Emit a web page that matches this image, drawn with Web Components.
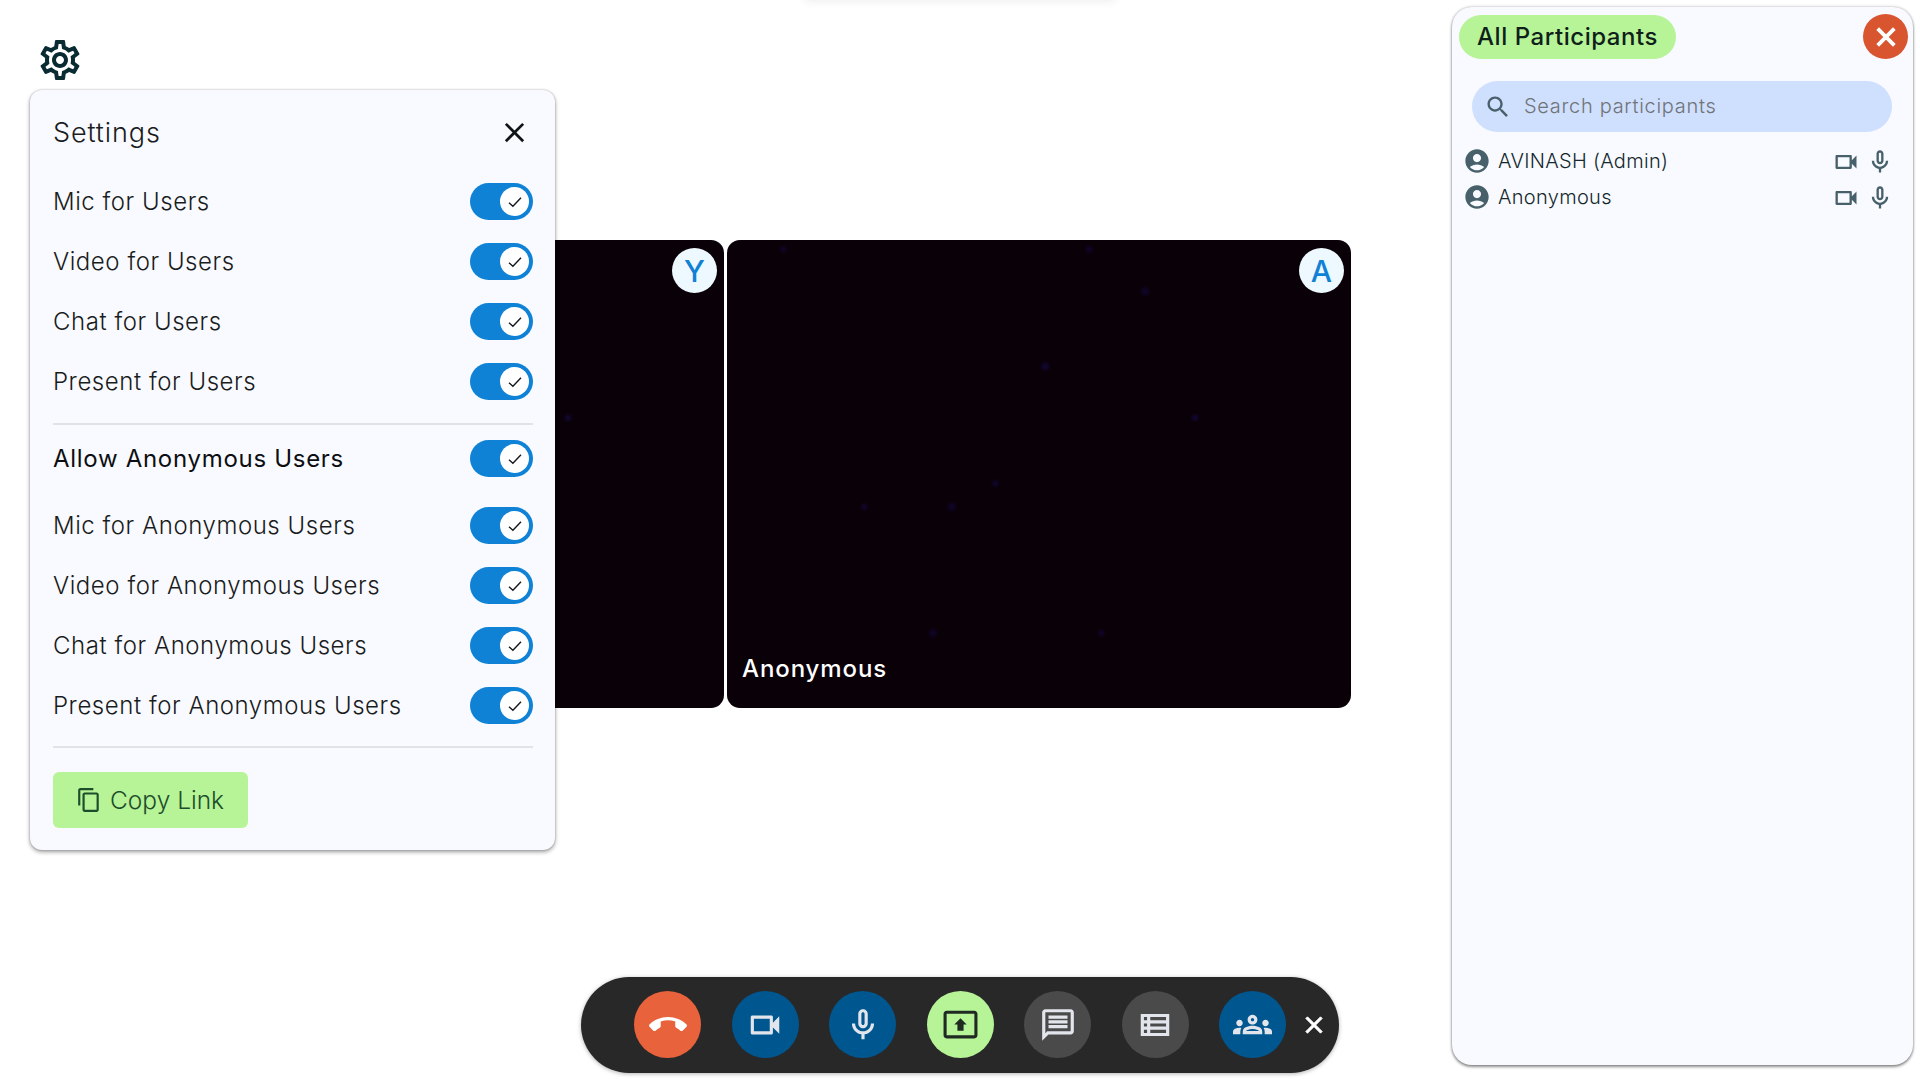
<!DOCTYPE html>
<html lang="en">
<head>
<meta charset="utf-8">
<title>Call</title>
<style>
  html, body {
    margin: 0;
    padding: 0;
    background: #ffffff;
    height: 100%;
    overflow: hidden;
    font-family: 'Inter', 'Liberation Sans', sans-serif;
  }
</style>
</head>
<body>
<call-page></call-page>

<script>
// Material icon paths, all on a 24 unit grid
const ICONS = {
  settings: 'M19.43 12.98c.04-.32.07-.64.07-.98 0-.34-.03-.66-.07-.98l2.11-1.65c.19-.15.24-.42.12-.64l-2-3.46c-.09-.16-.26-.25-.44-.25-.06 0-.12.01-.17.03l-2.49 1c-.52-.4-1.08-.73-1.69-.98l-.38-2.65C14.46 2.18 14.25 2 14 2h-4c-.25 0-.46.18-.49.42l-.38 2.65c-.61.25-1.17.59-1.69.98l-2.49-1c-.06-.02-.12-.03-.18-.03-.17 0-.34.09-.43.25l-2 3.46c-.13.22-.07.49.12.64l2.11 1.65c-.04.32-.07.65-.07.98 0 .33.03.66.07.98l-2.11 1.65c-.19.15-.24.42-.12.64l2 3.46c.09.16.26.25.44.25.06 0 .12-.01.17-.03l2.49-1c.52.4 1.08.73 1.69.98l.38 2.65c.03.24.24.42.49.42h4c.25 0 .46-.18.49-.42l.38-2.65c.61-.25 1.17-.59 1.69-.98l2.49 1c.06.02.12.03.18.03.17 0 .34-.09.43-.25l2-3.46c.12-.22.07-.49-.12-.64l-2.11-1.65zm-1.98-1.71c.04.31.05.52.05.73 0 .21-.02.43-.05.73l-.14 1.13.89.7 1.08.84-.7 1.21-1.27-.51-1.04-.42-.9.68c-.43.32-.84.56-1.25.73l-1.06.43-.16 1.13-.2 1.35h-1.4l-.19-1.35-.16-1.13-1.06-.43c-.43-.18-.83-.41-1.23-.71l-.91-.7-1.06.43-1.27.51-.7-1.21 1.08-.84.89-.7-.14-1.13c-.03-.31-.05-.54-.05-.74s.02-.43.05-.73l.14-1.13-.89-.7-1.08-.84.7-1.21 1.27.51 1.04.42.9-.68c.43-.32.84-.56 1.25-.73l1.06-.43.16-1.13.2-1.35h1.39l.19 1.35.16 1.13 1.06.43c.43.18.83.41 1.23.71l.91.7 1.06-.43 1.27-.51.7 1.21-1.07.85-.89.7.14 1.13zM12 8c-2.21 0-4 1.79-4 4s1.79 4 4 4 4-1.79 4-4-1.79-4-4-4zm0 6c-1.1 0-2-.9-2-2s.9-2 2-2 2 .9 2 2-.9 2-2 2z',
  close: 'M19 6.41 17.59 5 12 10.59 6.41 5 5 6.41 10.59 12 5 17.59 6.41 19 12 13.41 17.59 19 19 17.59 13.41 12z',
  copy: 'M16 1H4c-1.1 0-2 .9-2 2v14h2V3h12V1zm3 4H8c-1.1 0-2 .9-2 2v14c0 1.1.9 2 2 2h11c1.1 0 2-.9 2-2V7c0-1.1-.9-2-2-2zm0 16H8V7h11v14z',
  search: 'M15.5 14h-.79l-.28-.27C15.41 12.59 16 11.11 16 9.5 16 5.91 13.09 3 9.5 3S3 5.91 3 9.5 5.91 16 9.5 16c1.61 0 3.09-.59 4.23-1.57l.27.28v.79l5 4.99L20.49 19l-4.99-5zm-6 0C7.01 14 5 11.99 5 9.5S7.01 5 9.5 5 14 7.01 14 9.5 11.99 14 9.5 14z',
  account: 'M12 2C6.48 2 2 6.48 2 12s4.48 10 10 10 10-4.48 10-10S17.52 2 12 2zm0 4c1.93 0 3.5 1.57 3.5 3.5S13.93 13 12 13s-3.5-1.57-3.5-3.5S10.07 6 12 6zm0 14c-2.03 0-4.43-.82-6.14-2.88C7.55 15.8 9.68 15 12 15s4.45.8 6.14 2.12C16.43 19.18 14.03 20 12 20z',
  videocam: 'M17 10.5V7c0-.55-.45-1-1-1H4c-.55 0-1 .45-1 1v10c0 .55.45 1 1 1h12c.55 0 1-.45 1-1v-3.5l4 4v-11l-4 4zM15 16H5V8h10v8z',
  mic: 'M12 14c1.66 0 3-1.34 3-3V5c0-1.66-1.34-3-3-3S9 3.34 9 5v6c0 1.66 1.34 3 3 3zm-1-9c0-.55.45-1 1-1s1 .45 1 1v6c0 .55-.45 1-1 1s-1-.45-1-1V5zm6 6c0 2.76-2.24 5-5 5s-5-2.24-5-5H5c0 3.53 2.61 6.43 6 6.92V21h2v-3.08c3.39-.49 6-3.39 6-6.92h-2z',
  hangup: 'M12 9c-1.6 0-3.15.25-4.6.72v3.1c0 .39-.23.74-.56.9-.98.49-1.87 1.12-2.66 1.85-.18.18-.43.28-.7.28-.28 0-.53-.11-.71-.29L.29 13.08c-.18-.17-.29-.42-.29-.7 0-.28.11-.53.29-.71C3.34 8.78 7.46 7 12 7s8.66 1.78 11.71 4.67c.18.18.29.43.29.71 0 .28-.11.53-.29.71l-2.48 2.48c-.18.18-.43.29-.71.29-.27 0-.52-.11-.7-.28-.79-.74-1.69-1.36-2.67-1.85-.33-.16-.56-.5-.56-.9v-3.1C15.15 9.25 13.6 9 12 9z',
  present: 'M21 3H3c-1.11 0-2 .89-2 2v14c0 1.11.89 2 2 2h18c1.11 0 2-.89 2-2V5c0-1.11-.89-2-2-2zm0 16.02H3V4.98h18v14.04zM10 12H8l4-4 4 4h-2v4h-4v-4z',
  chat: 'M20 2H4c-1.1 0-2 .9-2 2v18l4-4h14c1.1 0 2-.9 2-2V4c0-1.1-.9-2-2-2zm0 14H5.17L4 17.17V4h16v12zM6 12h12v2H6zM6 9h12v2H6zM6 6h12v2H6z',
  list: 'M3 5v14h18V5H3zm4 2v2H5V7h2zm-2 6v-2h2v2H5zm0 2h2v2H5v-2zm14 2H9v-2h10v2zm0-4H9v-2h10v2zm0-4H9V7h10v2z',
  groups: 'M4 13c1.1 0 2-.9 2-2 0-1.1-.9-2-2-2s-2 .9-2 2c0 1.1.9 2 2 2zm1.13 1.1c-.37-.06-.74-.1-1.13-.1-.99 0-1.93.21-2.78.58C.48 14.9 0 15.62 0 16.43V18h4.5v-1.61c0-.83.23-1.61.63-2.29zM20 13c1.1 0 2-.9 2-2 0-1.1-.9-2-2-2s-2 .9-2 2c0 1.1.9 2 2 2zm4 3.43c0-.81-.48-1.53-1.22-1.85-.85-.37-1.79-.58-2.78-.58-.39 0-.76.04-1.13.1.4.68.63 1.46.63 2.29V18H24v-1.57zm-7.76-2.78c-1.17-.52-2.61-.9-4.24-.9-1.63 0-3.07.39-4.24.9C6.68 14.13 6 15.21 6 16.39V18h12v-1.61c0-1.18-.68-2.26-1.76-2.74zM8.07 16c.09-.23.13-.39.91-.69.97-.38 1.99-.56 3.02-.56s2.05.18 3.02.56c.77.3.81.46.91.69H8.07zM12 8c.55 0 1 .45 1 1s-.45 1-1 1-1-.45-1-1 .45-1 1-1m0-2c-1.66 0-3 1.34-3 3s1.34 3 3 3 3-1.34 3-3-1.34-3-3-3z'
};

class XIcon extends HTMLElement {
  constructor() {
    super();
    this.attachShadow( {mode: 'open'} );
  }

  connectedCallback() {
    const size = this.getAttribute( 'size' ) || 24;
    const weight = this.getAttribute( 'weight' ) || 0;
    const d = ICONS[this.getAttribute( 'name' )];

    this.shadowRoot.innerHTML = /* template */ `
      <style>
        :host {
          display: inline-flex;
          flex: none;
          width: ${size}px;
          height: ${size}px;
        }
        svg {
          display: block;
          width: 100%;
          height: 100%;
          fill: currentColor;
          stroke: currentColor;
          stroke-width: ${weight};
        }
      </style>
      <svg viewBox="0 0 24 24"><path d="${d}"></path></svg>
    `;
  }
}
window.customElements.define( 'x-icon', XIcon );

class ToggleSwitch extends HTMLElement {
  constructor() {
    super();
    const template = document.createElement( 'template' );
    template.innerHTML = /* template */ `
      <style>
        :host {
          box-sizing: border-box;
          display: flex;
          justify-content: flex-end;
          align-items: center;
          flex: none;
          width: 63px;
          height: 37px;
          padding: 0 4px;
          border-radius: 19px;
          background: #0f82d6;
        }
        span {
          display: flex;
          align-items: center;
          justify-content: center;
          width: 29px;
          height: 29px;
          border-radius: 50%;
          background: #ffffff;
        }
        svg {
          width: 18px;
          height: 18px;
          fill: none;
          stroke: #15181c;
          stroke-width: 1.4;
        }
      </style>
      <span><svg viewBox="0 0 18 18"><path d="M3 9.8 L6.9 13.2 L15 4.8"></path></svg></span>
    `;
    this.attachShadow( {mode: 'open'} );
    this.shadowRoot.appendChild( template.content.cloneNode( true ) );
  }
}
window.customElements.define( 'toggle-switch', ToggleSwitch );

class SettingRow extends HTMLElement {
  constructor() {
    super();
    const template = document.createElement( 'template' );
    template.innerHTML = /* template */ `
      <style>
        :host {
          display: flex;
          align-items: center;
          justify-content: space-between;
          height: 37px;
          font-size: 24px;
          font-weight: 300;
          letter-spacing: 0.55px;
          color: #191c20;
        }
        :host( [strong] ) {
          font-weight: 400;
          letter-spacing: 0.7px;
          color: #0c0e11;
        }
      </style>
      <slot></slot>
      <toggle-switch></toggle-switch>
    `;
    this.attachShadow( {mode: 'open'} );
    this.shadowRoot.appendChild( template.content.cloneNode( true ) );
  }
}
window.customElements.define( 'setting-row', SettingRow );

class SettingsPanel extends HTMLElement {
  constructor() {
    super();
    const template = document.createElement( 'template' );
    template.innerHTML = /* template */ `
      <style>
        :host {
          box-sizing: border-box;
          display: flex;
          flex-direction: column;
          width: 525px;
          height: 760px;
          padding: 23px 22px 22px 23px;
          border-radius: 12px;
          background: #f9faff;
          box-shadow: 0 2px 4px rgba( 0, 0, 0, 0.38 ), 0 0 2px rgba( 0, 0, 0, 0.25 );
        }
        header {
          display: flex;
          align-items: center;
          justify-content: space-between;
          height: 40px;
          margin-bottom: 30px;
          padding-right: 2px;
          font-size: 27px;
          font-weight: 300;
          letter-spacing: 0.9px;
          color: #191c20;
        }
        header span {
          padding-bottom: 2px;
        }
        header x-icon {
          color: #111417;
          margin-top: -1px;
        }
        .group {
          display: flex;
          flex-direction: column;
          gap: 23px;
        }
        hr {
          width: 100%;
          height: 2px;
          margin: 23px 0 15px;
          border: 0;
          background: #e2e3e9;
        }
        .allow {
          margin-bottom: 30px;
        }
        .last {
          margin: 22px 0 24px;
        }
        button {
          display: flex;
          align-items: center;
          gap: 8px;
          width: 195px;
          height: 56px;
          padding: 0 0 0 23px;
          border: 0;
          border-radius: 6px;
          background: #b7f397;
          color: #1d4d2b;
          font: 300 24.5px 'Inter', 'Liberation Sans', sans-serif;
        }
      </style>
      <header>
        <span>Settings</span>
        <x-icon name="close" size="33"></x-icon>
      </header>
      <div class="group">
        <setting-row>Mic for Users</setting-row>
        <setting-row>Video for Users</setting-row>
        <setting-row>Chat for Users</setting-row>
        <setting-row>Present for Users</setting-row>
      </div>
      <hr>
      <setting-row class="allow" strong>Allow Anonymous Users</setting-row>
      <div class="group">
        <setting-row>Mic for Anonymous Users</setting-row>
        <setting-row>Video for Anonymous Users</setting-row>
        <setting-row>Chat for Anonymous Users</setting-row>
        <setting-row>Present for Anonymous Users</setting-row>
      </div>
      <hr class="last">
      <button type="button"><x-icon name="copy" size="26"></x-icon>Copy Link</button>
    `;
    this.attachShadow( {mode: 'open'} );
    this.shadowRoot.appendChild( template.content.cloneNode( true ) );
  }
}
window.customElements.define( 'settings-panel', SettingsPanel );

class ParticipantRow extends HTMLElement {
  constructor() {
    super();
    const template = document.createElement( 'template' );
    template.innerHTML = /* template */ `
      <style>
        :host {
          display: flex;
          align-items: center;
          height: 36px;
          color: #47606a;
        }
        .name {
          flex: 1;
          margin-left: 7px;
          font-size: 20px;
          font-weight: 300;
          letter-spacing: 0.3px;
          color: #14282e;
        }
        .cam, .mic {
          margin-top: 1px;
        }
        .mic {
          margin-left: 6px;
        }
      </style>
      <x-icon name="account" size="28"></x-icon>
      <span class="name"><slot></slot></span>
      <x-icon class="cam" name="videocam" size="28"></x-icon>
      <x-icon class="mic" name="mic" size="28"></x-icon>
    `;
    this.attachShadow( {mode: 'open'} );
    this.shadowRoot.appendChild( template.content.cloneNode( true ) );
  }
}
window.customElements.define( 'participant-row', ParticipantRow );

class ParticipantsPanel extends HTMLElement {
  constructor() {
    super();
    const template = document.createElement( 'template' );
    template.innerHTML = /* template */ `
      <style>
        :host {
          box-sizing: border-box;
          display: flex;
          flex-direction: column;
          width: 461px;
          height: 1058px;
          padding: 7px 5px 0 7px;
          border-radius: 20px;
          background: #f9faff;
          box-shadow: 0 2px 3px rgba( 0, 0, 0, 0.4 ), 0 0 3px rgba( 0, 0, 0, 0.3 );
        }
        header {
          display: flex;
          align-items: center;
          justify-content: space-between;
          height: 45px;
        }
        .pill {
          display: flex;
          align-items: center;
          justify-content: center;
          width: 217px;
          height: 44px;
          border-radius: 22px;
          background: #b7f397;
          color: #0f1f1a;
          font-size: 24px;
          font-weight: 500;
          letter-spacing: 0.55px;
          white-space: nowrap;
        }
        .close {
          display: flex;
          align-items: center;
          justify-content: center;
          width: 45px;
          height: 45px;
          border-radius: 50%;
          background: #d95530;
          color: #ffffff;
        }
        .search {
          display: flex;
          align-items: center;
          gap: 12px;
          height: 51px;
          margin: 22px 16px 0 13px;
          padding-left: 12px;
          border-radius: 26px;
          background: #cfdffe;
          color: #47606a;
          font-size: 20px;
          font-weight: 300;
          letter-spacing: 0.7px;
        }
        .search span {
          color: #6f7377;
          padding-bottom: 2px;
        }
        .list {
          display: flex;
          flex-direction: column;
          margin: 11px 14px 0 4px;
        }
      </style>
      <header>
        <div class="pill">All Participants</div>
        <div class="close"><x-icon name="close" size="30" weight="1"></x-icon></div>
      </header>
      <div class="search">
        <x-icon name="search" size="28"></x-icon>
        <span>Search participants</span>
      </div>
      <div class="list">
        <participant-row>AVINASH (Admin)</participant-row>
        <participant-row>Anonymous</participant-row>
      </div>
    `;
    this.attachShadow( {mode: 'open'} );
    this.shadowRoot.appendChild( template.content.cloneNode( true ) );
  }
}
window.customElements.define( 'participants-panel', ParticipantsPanel );

class VideoTile extends HTMLElement {
  constructor() {
    super();
    const template = document.createElement( 'template' );
    template.innerHTML = /* template */ `
      <style>
        :host {
          box-sizing: border-box;
          position: relative;
          display: flex;
          align-items: flex-end;
          flex: none;
          width: 624px;
          height: 468px;
          padding: 0 0 25px 15px;
          border-radius: 13px;
          background-color: #0a0008;
          background-image:
            radial-gradient( circle at 51% 27%, #120836 0, transparent 6px ),
            radial-gradient( circle at 67% 11%, #100630 0, transparent 6px ),
            radial-gradient( circle at 75% 38%, #120836 0, transparent 5px ),
            radial-gradient( circle at 22% 57%, #100630 0, transparent 5px ),
            radial-gradient( circle at 36% 57%, #100630 0, transparent 6px ),
            radial-gradient( circle at 43% 52%, #100630 0, transparent 5px ),
            radial-gradient( circle at 60% 84%, #0f052c 0, transparent 5px ),
            radial-gradient( circle at 33% 84%, #0f052c 0, transparent 6px ),
            radial-gradient( circle at 58% 2%, #100630 0, transparent 5px ),
            radial-gradient( circle at 9% 2%, #0f052c 0, transparent 5px );
          color: #ffffff;
          font-size: 24px;
          font-weight: 500;
          letter-spacing: 0.9px;
        }
        .badge {
          position: absolute;
          top: 8px;
          right: 7px;
          display: flex;
          align-items: center;
          justify-content: center;
          width: 45px;
          height: 45px;
          border-radius: 50%;
          background: #eef8ff;
          color: #0f82d6;
          font-size: 30px;
          font-weight: 500;
          letter-spacing: 0;
        }
      </style>
      <slot></slot>
      <div class="badge"></div>
    `;
    this.attachShadow( {mode: 'open'} );
    this.shadowRoot.appendChild( template.content.cloneNode( true ) );
    this.$badge = this.shadowRoot.querySelector( '.badge' );
  }

  connectedCallback() {
    this.$badge.innerText = this.getAttribute( 'initial' );
  }
}
window.customElements.define( 'video-tile', VideoTile );

class CallButton extends HTMLElement {
  constructor() {
    super();
    const template = document.createElement( 'template' );
    template.innerHTML = /* template */ `
      <style>
        :host {
          display: flex;
          align-items: center;
          justify-content: center;
          flex: none;
          width: 67px;
          height: 67px;
          border-radius: 50%;
          background: var( --call-button-background, #4a4a4a );
          color: var( --call-button-color, #e2e5ec );
        }
      </style>
      <slot></slot>
    `;
    this.attachShadow( {mode: 'open'} );
    this.shadowRoot.appendChild( template.content.cloneNode( true ) );
  }
}
window.customElements.define( 'call-button', CallButton );

class CallToolbar extends HTMLElement {
  constructor() {
    super();
    const template = document.createElement( 'template' );
    template.innerHTML = /* template */ `
      <style>
        :host {
          box-sizing: border-box;
          display: flex;
          align-items: center;
          gap: 30.5px;
          width: 758px;
          height: 96px;
          padding: 0 0 1px 53px;
          border-radius: 48px;
          background: #282828;
          box-shadow: 0 1px 4px rgba( 0, 0, 0, 0.3 );
        }
        .end {
          --call-button-background: #e8623c;
          --call-button-color: #ffffff;
        }
        .blue {
          --call-button-background: #00568f;
        }
        .green {
          --call-button-background: #b7f397;
          --call-button-color: #1f2a22;
        }
        .hide {
          margin-left: -17px;
          color: #ffffff;
        }
      </style>
      <call-button class="end"><x-icon name="hangup" size="38"></x-icon></call-button>
      <call-button class="blue"><x-icon name="videocam" size="38"></x-icon></call-button>
      <call-button class="blue"><x-icon name="mic" size="38"></x-icon></call-button>
      <call-button class="green"><x-icon name="present" size="37"></x-icon></call-button>
      <call-button><x-icon name="chat" size="38"></x-icon></call-button>
      <call-button><x-icon name="list" size="38"></x-icon></call-button>
      <call-button class="blue"><x-icon name="groups" size="39"></x-icon></call-button>
      <x-icon class="hide" name="close" size="28" weight="0.8"></x-icon>
    `;
    this.attachShadow( {mode: 'open'} );
    this.shadowRoot.appendChild( template.content.cloneNode( true ) );
  }
}
window.customElements.define( 'call-toolbar', CallToolbar );

class CallPage extends HTMLElement {
  constructor() {
    super();
    const template = document.createElement( 'template' );
    template.innerHTML = /* template */ `
      <style>
        :host {
          position: relative;
          display: block;
          width: 1920px;
          height: 1080px;
          overflow: hidden;
          background: #ffffff;
        }
        .stage {
          display: flex;
          gap: 3px;
          padding: 240px 0 0 100px;
        }
        .settings {
          position: absolute;
          top: 36px;
          left: 30px;
          display: flex;
          flex-direction: column;
          align-items: flex-start;
        }
        .gear {
          margin: 0 0 6px 6px;
          color: #0b2b33;
        }
        .participants {
          position: absolute;
          top: 7px;
          right: 7px;
        }
        .toolbar {
          position: absolute;
          top: 977px;
          left: 581px;
        }
        /* Top bar parked off screen, only its shadow shows */
        .peek {
          position: absolute;
          top: -30px;
          left: 805px;
          width: 310px;
          height: 30px;
          box-shadow: 0 1px 10px rgba( 0, 0, 0, 0.08 );
        }
      </style>
      <div class="peek"></div>
      <div class="stage">
        <video-tile initial="Y"></video-tile>
        <video-tile initial="A">Anonymous</video-tile>
      </div>
      <div class="settings">
        <x-icon class="gear" name="settings" size="48"></x-icon>
        <settings-panel></settings-panel>
      </div>
      <participants-panel class="participants"></participants-panel>
      <call-toolbar class="toolbar"></call-toolbar>
    `;
    this.attachShadow( {mode: 'open'} );
    this.shadowRoot.appendChild( template.content.cloneNode( true ) );
  }
}
window.customElements.define( 'call-page', CallPage );
</script>
</body>
</html>
